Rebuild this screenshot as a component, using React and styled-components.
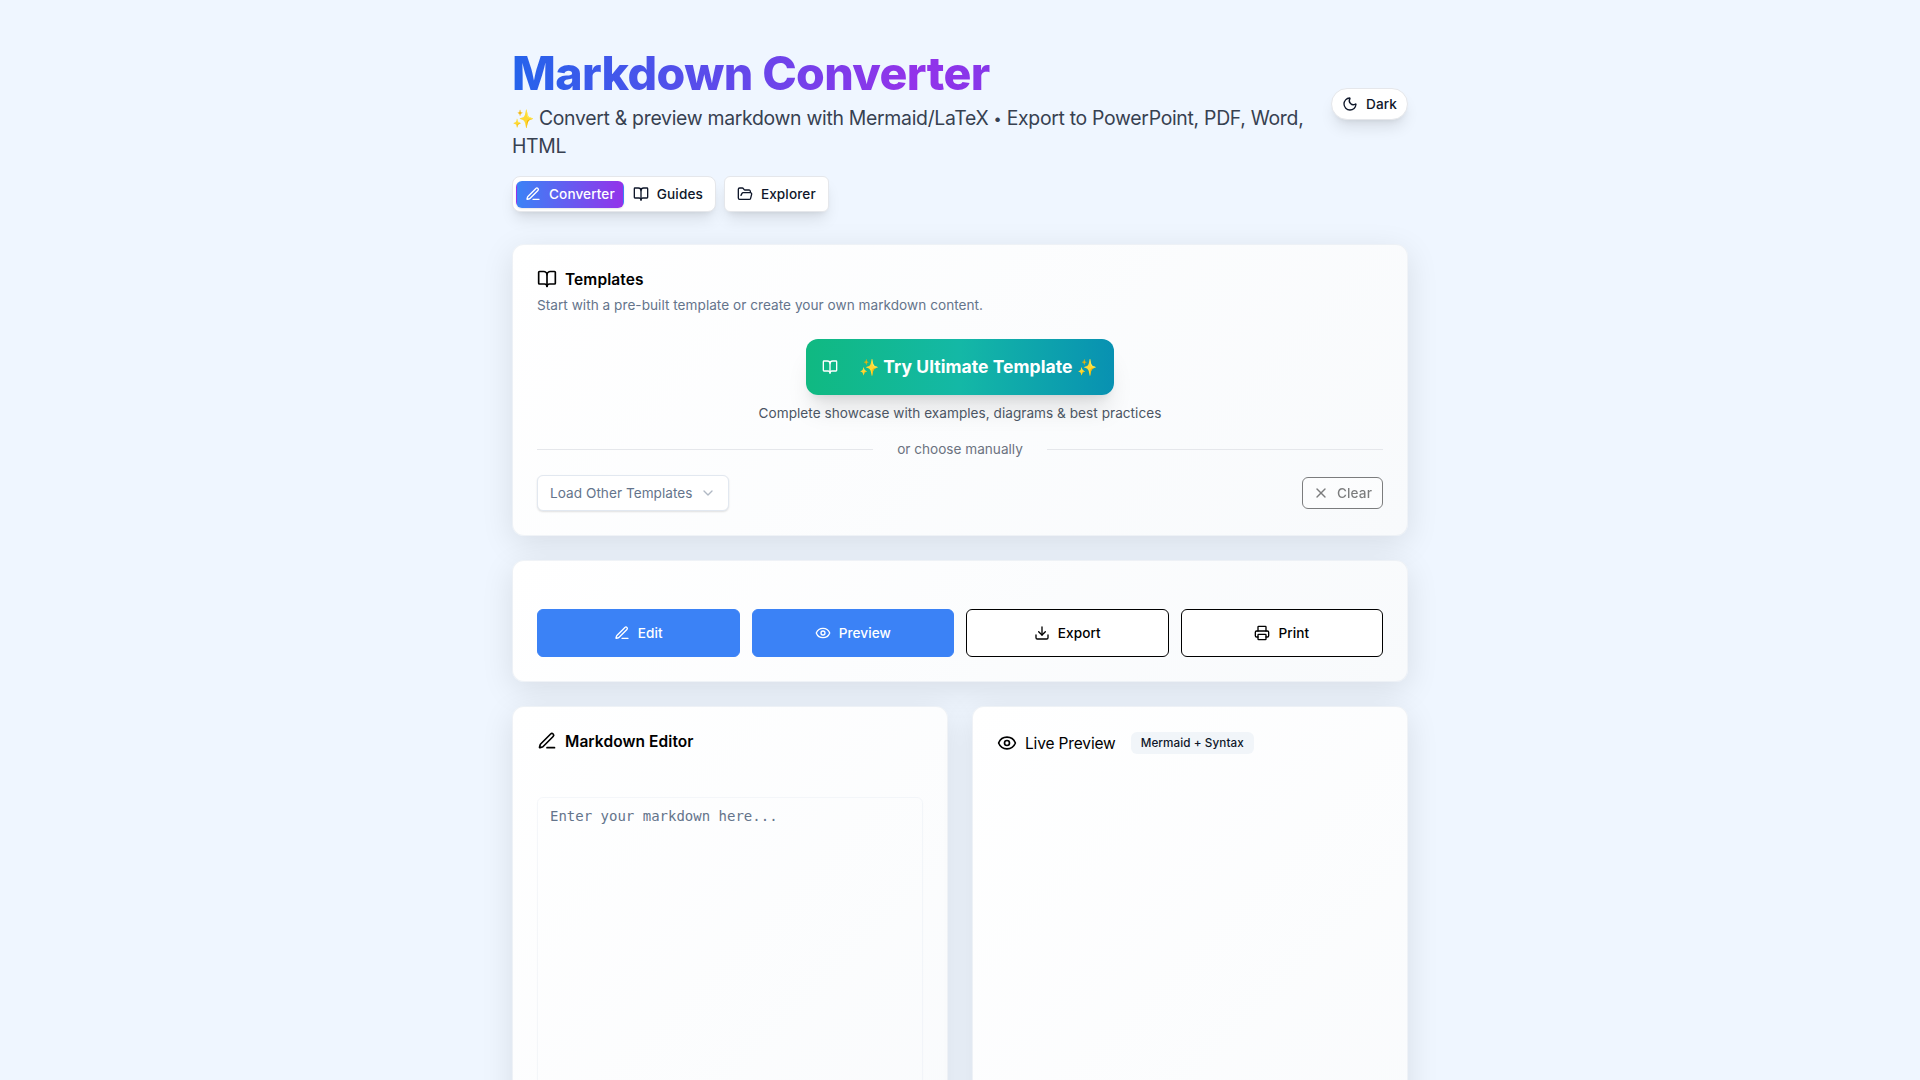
import React from "react";
import styled, { createGlobalStyle, css } from "styled-components";
import { BookOpen, FolderOpen, Moon, ChevronDown, X, Eye, Download, Printer } from "lucide-react";

const GlobalStyle = createGlobalStyle`
  *, *::before, *::after { box-sizing: border-box; }
  body {
    margin: 0;
    height: 1080px;
    overflow: hidden;
    background: #eff6ff;
    color: #000;
    font-family: Inter, "Liberation Sans", sans-serif;
    font-size: 15.5px;
    line-height: 24px;
  }
  h1, h2, p { margin: 0; }
  button, textarea { font-family: inherit; margin: 0; }
  svg { flex-shrink: 0; display: block; }
`;

const Page = styled.main`
  width: 896px;
  height: 1080px;
  overflow: visible;
  margin: 0 auto;
  padding-top: 48px;
`;

const Header = styled.header`
  display: flex;
  align-items: center;
  justify-content: space-between;
  gap: 16px;
`;

const Heading = styled.div`
  display: flex;
  flex-direction: column;
  gap: 7px;
  width: 804px;
`;

const Title = styled.h1`
  padding-top: 1px;
  font-size: 46.5px;
  line-height: 48px;
  font-weight: 800;
  letter-spacing: -0.62px;
  color: transparent;
  background: linear-gradient(90deg, #2563eb, #9333ea 50%, #4f46e5);
  background-clip: text;
`;

const Tagline = styled.p`
  font-size: 19.4px;
  line-height: 28px;
  letter-spacing: -0.29px;
  color: #374151;
`;

const Sparkles = styled.span`
  font-size: 0.925em;
  line-height: 1;
`;

const Bullet = styled.span`
  font-size: 0.75em;
  line-height: 1;
  vertical-align: 0.1em;
`;

const liftedShadow = "0 10px 15px -3px rgba(0, 0, 0, 0.1), 0 4px 6px -4px rgba(0, 0, 0, 0.1)";

const PillButton = styled.button`
  display: inline-flex;
  align-items: center;
  gap: 8px;
  height: 32px;
  padding: 0 10px;
  border: 1px solid #e5e7eb;
  border-radius: 16px;
  background: #fff;
  color: #0f172a;
  font-size: 13.6px;
  line-height: 20px;
  font-weight: 500;
  letter-spacing: 0.1px;
  box-shadow: ${liftedShadow};
`;

const Nav = styled.nav`
  display: flex;
  gap: 8px;
  margin-top: 16px;
`;

const TabGroup = styled.div`
  display: flex;
  align-items: center;
  height: 36px;
  padding: 3px;
  border: 1px solid #e5e7eb;
  border-radius: 8px;
  background: #fff;
  box-shadow: ${liftedShadow};
`;

const Tab = styled.button`
  display: flex;
  align-items: center;
  gap: 8px;
  height: 27px;
  padding: 0 8px;
  border: 1px solid transparent;
  border-radius: 6px;
  background: transparent;
  color: #0f172a;
  font-size: 13.6px;
  line-height: 20px;
  font-weight: 500;
  letter-spacing: 0.1px;
  ${(p) =>
    p.$active &&
    css`
      color: #fff;
      background: linear-gradient(90deg, #3b82f6, #9333ea);
      box-shadow: 0 1px 2px rgba(0, 0, 0, 0.1);
    `}
`;

const NavButton = styled(PillButton)`
  height: 36px;
  padding: 0 12px;
  border-radius: 6px;
`;

const Card = styled.section`
  display: flex;
  flex-direction: column;
  padding: 24px;
  border: 1px solid rgba(226, 232, 240, 0.5);
  border-radius: 12px;
  background: linear-gradient(135deg, #ffffff, #f8fafc);
  box-shadow: 0 8px 32px rgba(0, 0, 0, 0.1);
`;

const Stack = styled.div`
  display: flex;
  flex-direction: column;
  gap: 24px;
  margin-top: 32px;
`;

const CardTitle = styled.h2`
  display: flex;
  align-items: center;
  gap: 8px;
  height: 20px;
  font-size: 15.5px;
  line-height: 20px;
  font-weight: ${(p) => (p.$plain ? 400 : 600)};
  letter-spacing: ${(p) => (p.$plain ? "-0.15px" : "0.08px")};
  span { padding-top: 2px; }
`;

const CardDescription = styled.p`
  margin-top: 6px;
  font-size: 13.6px;
  line-height: 20px;
  letter-spacing: 0.035px;
  color: #64748b;
`;

const Showcase = styled.div`
  display: flex;
  flex-direction: column;
  align-items: center;
  gap: 8px;
  margin-top: 24px;
`;

const UltimateButton = styled.button`
  display: flex;
  align-items: center;
  gap: 21px;
  width: 308px;
  height: 56px;
  padding: 0 16px;
  border: 0;
  border-radius: 12px;
  background: linear-gradient(90deg, #10b981, #14b8a6 50%, #0891b2);
  color: #fff;
  font-size: 17.5px;
  line-height: 28px;
  font-weight: 700;
  letter-spacing: 0.06px;
  white-space: nowrap;
  box-shadow: 0 20px 25px -5px rgba(0, 0, 0, 0.1), 0 8px 10px -6px rgba(0, 0, 0, 0.1);
`;

const Caption = styled.p`
  font-size: 13.6px;
  line-height: 20px;
  letter-spacing: 0.035px;
  color: #4b5563;
`;

const Divider = styled.div`
  display: flex;
  align-items: center;
  gap: 24px;
  margin-top: 16px;
  font-size: 13.6px;
  line-height: 20px;
  color: #6b7280;
  &::before, &::after {
    content: "";
    flex: 1;
    height: 1px;
    background: #e5e7eb;
  }
`;

const TemplateRow = styled.div`
  display: flex;
  align-items: center;
  justify-content: space-between;
  margin-top: 16px;
`;

const Select = styled.button`
  display: flex;
  align-items: center;
  justify-content: space-between;
  width: 192px;
  height: 36px;
  padding: 0 12px;
  border: 1px solid #e2e8f0;
  border-radius: 6px;
  background: #fff;
  color: #64748b;
  font-size: 13.6px;
  line-height: 20px;
  letter-spacing: 0.04px;
  box-shadow: 0 1px 2px rgba(0, 0, 0, 0.12);
  svg { opacity: 0.5; }
`;

const ClearButton = styled.button`
  display: flex;
  align-items: center;
  gap: 8px;
  height: 32px;
  padding: 0 10px;
  border: 1px solid #000;
  border-radius: 6px;
  background: #fff;
  color: #000;
  font-size: 13.6px;
  line-height: 20px;
  font-weight: 500;
  letter-spacing: 0.1px;
  opacity: 0.5;
`;

const Actions = styled.div`
  display: grid;
  grid-template-columns: repeat(4, 1fr);
  gap: 12px;
  margin-top: 24px;
`;

const ActionButton = styled.button`
  display: flex;
  align-items: center;
  justify-content: center;
  gap: 8px;
  height: 48px;
  border: 1px solid ${(p) => (p.$primary ? "#3b82f6" : "#000")};
  border-radius: 6px;
  background: ${(p) => (p.$primary ? "#3b82f6" : "#fff")};
  color: ${(p) => (p.$primary ? "#fff" : "#000")};
  font-size: 13.6px;
  line-height: 20px;
  font-weight: 500;
  letter-spacing: 0.07px;
`;

const Panels = styled.div`
  display: grid;
  grid-template-columns: 1fr 1fr;
  gap: 24px;
`;

const Panel = styled(Card)`
  height: 620px;
`;

const Editor = styled.textarea`
  margin-top: 46px;
  height: 500px;
  padding: 8px 12px;
  border: 1px solid rgba(226, 232, 240, 0.35);
  border-radius: 6px;
  background: transparent;
  resize: none;
  outline: none;
  font-family: "DejaVu Sans Mono", monospace;
  font-size: 14px;
  line-height: 20px;
  box-shadow: 0 1px 2px rgba(0, 0, 0, 0.02);
  &::placeholder { color: #64748b; }
`;

const PreviewHeader = styled.div`
  display: flex;
  align-items: center;
  gap: 15px;
  height: 24px;
`;

const Badge = styled.span`
  padding: 2px 9px;
  border: 1px solid transparent;
  border-radius: 6px;
  background: #f1f5f9;
  color: #0f172a;
  font-size: 11.7px;
  line-height: 16px;
  font-weight: 500;
  letter-spacing: 0.08px;
`;

function Pen({ size }) {
  return (
    <svg
      width={size}
      height={size}
      viewBox="0 0 24 24"
      fill="none"
      stroke="currentColor"
      strokeWidth="2"
      strokeLinecap="round"
      strokeLinejoin="round"
    >
      <path d="M12 20h9" />
      <path d="M16.376 3.622a1 1 0 0 1 3.002 3.002L7.368 18.635a2 2 0 0 1-.855.506l-2.872.838a.5.5 0 0 1-.62-.62l.838-2.872a2 2 0 0 1 .506-.854z" />
    </svg>
  );
}

export default function App() {
  return (
    <>
      <GlobalStyle />
      <Page>
        <Header>
          <Heading>
            <Title>Markdown Converter</Title>
            <Tagline>
              <Sparkles>✨</Sparkles> Convert &amp; preview markdown with Mermaid/LaTeX <Bullet>•</Bullet> Export to
              PowerPoint, PDF, Word, HTML
            </Tagline>
          </Heading>
          <PillButton><Moon size={16} />Dark</PillButton>
        </Header>
        <Nav>
          <TabGroup>
            <Tab $active><Pen size={16} />Converter</Tab>
            <Tab><BookOpen size={16} />Guides</Tab>
          </TabGroup>
          <NavButton><FolderOpen size={16} />Explorer</NavButton>
        </Nav>
        <Stack>
          <Card>
            <CardTitle><BookOpen size={20} /><span>Templates</span></CardTitle>
            <CardDescription>Start with a pre-built template or create your own markdown content.</CardDescription>
            <Showcase>
              <UltimateButton>
                <BookOpen size={16} />
                <span><Sparkles>✨</Sparkles> Try Ultimate Template <Sparkles>✨</Sparkles></span>
              </UltimateButton>
              <Caption>Complete showcase with examples, diagrams &amp; best practices</Caption>
            </Showcase>
            <Divider>or choose manually</Divider>
            <TemplateRow>
              <Select>Load Other Templates<ChevronDown size={16} /></Select>
              <ClearButton><X size={16} />Clear</ClearButton>
            </TemplateRow>
          </Card>
          <Card>
            <Actions>
              <ActionButton $primary><Pen size={16} />Edit</ActionButton>
              <ActionButton $primary><Eye size={16} />Preview</ActionButton>
              <ActionButton><Download size={16} />Export</ActionButton>
              <ActionButton><Printer size={16} />Print</ActionButton>
            </Actions>
          </Card>
          <Panels>
            <Panel>
              <CardTitle><Pen size={20} /><span>Markdown Editor</span></CardTitle>
              <Editor placeholder="Enter your markdown here..." />
            </Panel>
            <Panel>
              <PreviewHeader>
                <CardTitle $plain><Eye size={20} /><span>Live Preview</span></CardTitle>
                <Badge>Mermaid + Syntax</Badge>
              </PreviewHeader>
            </Panel>
          </Panels>
        </Stack>
      </Page>
    </>
  );
}
